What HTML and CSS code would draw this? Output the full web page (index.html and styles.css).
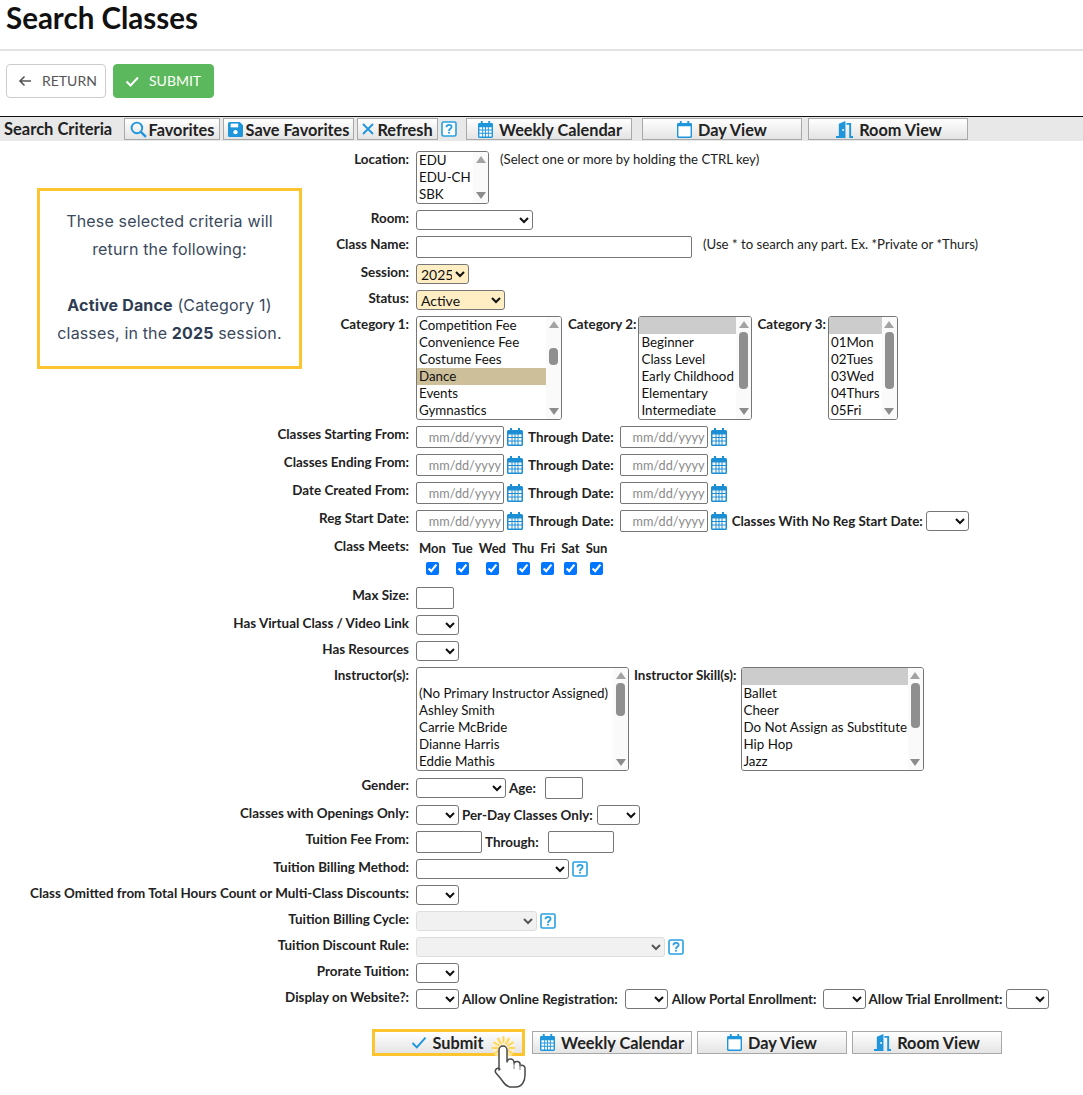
FILE: index.html
```html
<!DOCTYPE html>
<html lang="en">
<head>
<meta charset="utf-8">
<title>Search Classes</title>
<link rel="stylesheet" href="styles.css">
</head>
<body>
<svg class="defs" width="0" height="0" aria-hidden="true">
  <symbol id="cal" viewBox="0 0 16 18"><path fill="currentColor" d="M3 0h2v2h6V0h2v2h1.5A1.5 1.5 0 0 1 16 3.500V16.500A1.500 1.500 0 0 1 14.500 18H1.500A1.500 1.500 0 0 1 0 16.500V3.500A1.500 1.500 0 0 1 1.500 2H3z"/><path fill="#fff" d="M1.500 6.500h3v2.500h-3zM5.500 6.500h2v2.500h-2zM8.500 6.500h2v2.500h-2zM11.500 6.500h3v2.500h-3zM1.500 10h3v2.500h-3zM5.500 10h2v2.500h-2zM8.500 10h2v2.500h-2zM11.500 10h3v2.500h-3zM1.500 13.500h3V16.500h-3zM5.500 13.500h2V16.500h-2zM8.500 13.500h2V16.500h-2zM11.500 13.500h3V16.500h-3z"/></symbol>
  <symbol id="day" viewBox="0 0 16 18"><path fill="currentColor" d="M3 0h2v2h6V0h2v2h1.500A1.500 1.500 0 0 1 16 3.500V16.500A1.500 1.500 0 0 1 14.500 18H1.500A1.500 1.500 0 0 1 0 16.500V3.500A1.500 1.500 0 0 1 1.500 2H3z"/><path fill="#fff" d="M1.500 5.500h13V16a.5.5 0 0 1-.5.5H2a.5.5 0 0 1-.5-.5z"/></symbol>
  <symbol id="door" viewBox="0 0 18 18"><path fill="currentColor" d="M3 3 10 0V18H0V16H3z"/><path fill="currentColor" d="M11 2h5v14h2v2h-4V4h-3z"/><circle cx="7.500" cy="9.500" r="1" fill="#fff"/></symbol>
  <symbol id="help" viewBox="0 0 16 16"><rect x="1" y="1" width="14" height="14" rx="1.500" fill="#fff" stroke="currentColor" stroke-width="1.600"/><path fill="none" stroke="currentColor" stroke-width="1.800" d="M5.400 6.200C5.500 4.600 6.600 3.800 8 3.800c1.500 0 2.600.9 2.600 2.200 0 1.800-2.600 1.900-2.600 3.900"/><rect x="7.100" y="10.800" width="1.800" height="1.800" fill="currentColor"/></symbol>
</svg>

<h1 class="title">Search Classes</h1>
<div class="actions">
  <button class="act act-return" type="button">
    <svg class="act-icon" viewBox="0 0 14 14"><path fill="none" stroke="currentColor" stroke-width="1.600" d="M13 7H2M6.500 2.500 2 7l4.500 4.500"/></svg>RETURN
  </button>
  <button class="act act-submit" type="button">
    <svg class="act-icon" viewBox="0 0 14 14"><path fill="none" stroke="currentColor" stroke-width="2" d="M1.500 7.500 5.500 11.500 13 3.500"/></svg>SUBMIT
  </button>
</div>

<main class="page">
  <div class="toolbar">
    <span class="toolbar-title">Search Criteria</span>
    <button class="tool tool-fav" type="button">
      <svg class="ico ico-16" viewBox="0 0 16 16"><circle cx="6.500" cy="6.500" r="5" fill="none" stroke="currentColor" stroke-width="1.800"/><path stroke="currentColor" stroke-width="2.200" d="M10.200 10.200 15 15"/></svg>Favorites
    </button>
    <button class="tool tool-save" type="button">
      <svg class="ico ico-15" viewBox="0 0 14 14"><path fill="currentColor" d="M1.500 0H11l3 3v9.500a1.500 1.500 0 0 1-1.500 1.500h-11A1.500 1.500 0 0 1 0 12.500v-11A1.500 1.500 0 0 1 1.500 0z"/><path fill="#fff" d="M2.500 1.500h7v3.500h-7z"/><circle cx="7" cy="9.500" r="2" fill="#fff"/></svg>Save Favorites
    </button>
    <button class="tool tool-refresh" type="button">
      <svg class="ico ico-12" viewBox="0 0 12 12"><path stroke="currentColor" stroke-width="1.800" d="M1 1 11 11M11 1 1 11"/></svg>Refresh
    </button>
    <svg class="ico help help-bar"><use href="#help"/></svg>
    <button class="tool view view-week" type="button"><svg class="ico ico-cal"><use href="#cal"/></svg>Weekly Calendar</button>
    <button class="tool view view-day" type="button"><svg class="ico ico-cal"><use href="#day"/></svg>Day View</button>
    <button class="tool view view-room" type="button"><svg class="ico ico-door"><use href="#door"/></svg>Room View</button>
  </div>

  <aside class="callout">
    <p>These selected criteria will return the following:</p>
    <p><b>Active Dance</b> (Category 1) classes, in the <b>2025</b> session.</p>
  </aside>

  <form class="form">
    <div class="row">
      <label class="lbl">Location:</label>
      <div class="field">
        <div class="list list-loc">
          <div class="opts"><div class="opt">EDU</div><div class="opt">EDU-CH</div><div class="opt">SBK</div></div>
          <div class="sb"><i class="up"></i><i class="dn"></i></div>
        </div>
        <span class="hint hint-loc">(Select one or more by holding the CTRL key)</span>
      </div>
    </div>
    <div class="row"><label class="lbl">Room:</label><div class="field"><select class="sel w-room"><option></option></select></div></div>
    <div class="row">
      <label class="lbl">Class Name:</label>
      <div class="field"><input class="inp w-name" type="text"><span class="hint hint-name">(Use * to search any part. Ex. *Private or *Thurs)</span></div>
    </div>
    <div class="row"><label class="lbl">Session:</label><div class="field"><select class="sel hl w-sess"><option>2025</option></select></div></div>
    <div class="row"><label class="lbl">Status:</label><div class="field"><select class="sel hl w-stat"><option>Active</option></select></div></div>
    <div class="row">
      <label class="lbl">Category 1:</label>
      <div class="field">
        <div class="list list-c1">
          <div class="opts"><div class="opt">Competition Fee</div><div class="opt">Convenience Fee</div><div class="opt">Costume Fees</div><div class="opt on-tan">Dance</div><div class="opt">Events</div><div class="opt">Gymnastics</div></div>
          <div class="sb"><i class="up"></i><span class="track"><em class="thumb th-c1"></em></span><i class="dn"></i></div>
        </div>
        <label class="lbl-in m-c2">Category 2:</label>
        <div class="list list-c2">
          <div class="opts"><div class="opt on-grey">&nbsp;</div><div class="opt">Beginner</div><div class="opt">Class Level</div><div class="opt">Early Childhood</div><div class="opt">Elementary</div><div class="opt">Intermediate</div></div>
          <div class="sb"><i class="up"></i><span class="track"><em class="thumb th-long"></em></span><i class="dn"></i></div>
        </div>
        <label class="lbl-in m-c3">Category 3:</label>
        <div class="list list-c3">
          <div class="opts"><div class="opt on-grey">&nbsp;</div><div class="opt">01Mon</div><div class="opt">02Tues</div><div class="opt">03Wed</div><div class="opt">04Thurs</div><div class="opt">05Fri</div></div>
          <div class="sb"><i class="up"></i><span class="track"><em class="thumb th-long"></em></span><i class="dn"></i></div>
        </div>
      </div>
    </div>

    <div class="row">
      <label class="lbl">Classes Starting From:</label>
      <div class="field center">
        <input class="inp date" type="text" placeholder="mm/dd/yyyy"><svg class="ico ico-date"><use href="#cal"/></svg>
        <span class="in-lbl m-thru">Through Date:</span>
        <input class="inp date" type="text" placeholder="mm/dd/yyyy"><svg class="ico ico-date"><use href="#cal"/></svg>
      </div>
    </div>
    <div class="row">
      <label class="lbl">Classes Ending From:</label>
      <div class="field center">
        <input class="inp date" type="text" placeholder="mm/dd/yyyy"><svg class="ico ico-date"><use href="#cal"/></svg>
        <span class="in-lbl m-thru">Through Date:</span>
        <input class="inp date" type="text" placeholder="mm/dd/yyyy"><svg class="ico ico-date"><use href="#cal"/></svg>
      </div>
    </div>
    <div class="row">
      <label class="lbl">Date Created From:</label>
      <div class="field center">
        <input class="inp date" type="text" placeholder="mm/dd/yyyy"><svg class="ico ico-date"><use href="#cal"/></svg>
        <span class="in-lbl m-thru">Through Date:</span>
        <input class="inp date" type="text" placeholder="mm/dd/yyyy"><svg class="ico ico-date"><use href="#cal"/></svg>
      </div>
    </div>
    <div class="row">
      <label class="lbl">Reg Start Date:</label>
      <div class="field center">
        <input class="inp date" type="text" placeholder="mm/dd/yyyy"><svg class="ico ico-date"><use href="#cal"/></svg>
        <span class="in-lbl m-thru">Through Date:</span>
        <input class="inp date" type="text" placeholder="mm/dd/yyyy"><svg class="ico ico-date"><use href="#cal"/></svg>
        <span class="in-lbl m-noreg">Classes With No Reg Start Date:</span>
        <select class="sel w-43 m-3"><option></option></select>
      </div>
    </div>

    <div class="row">
      <label class="lbl">Class Meets:</label>
      <div class="field">
        <div class="days">
          <span>Mon</span><span>Tue</span><span>Wed</span><span>Thu</span><span>Fri</span><span>Sat</span><span>Sun</span>
          <input type="checkbox" checked><input type="checkbox" checked><input type="checkbox" checked><input type="checkbox" checked><input type="checkbox" checked><input type="checkbox" checked><input type="checkbox" checked>
        </div>
      </div>
    </div>

    <div class="row"><label class="lbl">Max Size:</label><div class="field"><input class="inp w-max" type="text"></div></div>
    <div class="row"><label class="lbl">Has Virtual Class / Video Link</label><div class="field"><select class="sel w-43"><option></option></select></div></div>
    <div class="row"><label class="lbl">Has Resources</label><div class="field"><select class="sel w-43"><option></option></select></div></div>
    <div class="row">
      <label class="lbl">Instructor(s):</label>
      <div class="field">
        <div class="list list-in">
          <div class="opts"><div class="opt">&nbsp;</div><div class="opt">(No Primary Instructor Assigned)</div><div class="opt">Ashley Smith</div><div class="opt">Carrie McBride</div><div class="opt">Dianne Harris</div><div class="opt">Eddie Mathis</div></div>
          <div class="sb"><i class="up"></i><span class="track"><em class="thumb th-in"></em></span><i class="dn"></i></div>
        </div>
        <label class="lbl-in m-skill">Instructor Skill(s):</label>
        <div class="list list-sk">
          <div class="opts"><div class="opt on-grey">&nbsp;</div><div class="opt">Ballet</div><div class="opt">Cheer</div><div class="opt">Do Not Assign as Substitute</div><div class="opt">Hip Hop</div><div class="opt">Jazz</div></div>
          <div class="sb"><i class="up"></i><span class="track"><em class="thumb th-sk"></em></span><i class="dn"></i></div>
        </div>
      </div>
    </div>
    <div class="row">
      <label class="lbl">Gender:</label>
      <div class="field center"><select class="sel w-gender"><option></option></select><span class="in-lbl m-age">Age:</span><input class="inp w-max" type="text"></div>
    </div>
    <div class="row">
      <label class="lbl">Classes with Openings Only:</label>
      <div class="field center"><select class="sel w-43"><option></option></select><span class="in-lbl m-3">Per-Day Classes Only:</span><select class="sel w-43 m-4"><option></option></select></div>
    </div>
    <div class="row">
      <label class="lbl">Tuition Fee From:</label>
      <div class="field center"><input class="inp w-fee" type="text"><span class="in-lbl m-3">Through:</span><input class="inp w-fee m-9" type="text"></div>
    </div>
    <div class="row">
      <label class="lbl">Tuition Billing Method:</label>
      <div class="field center"><select class="sel w-bill"><option></option></select><svg class="ico help"><use href="#help"/></svg></div>
    </div>
    <div class="row"><label class="lbl">Class Omitted from Total Hours Count or Multi-Class Discounts:</label><div class="field"><select class="sel w-43"><option></option></select></div></div>
    <div class="row">
      <label class="lbl">Tuition Billing Cycle:</label>
      <div class="field center"><select class="sel w-cycle" disabled><option></option></select><svg class="ico help"><use href="#help"/></svg></div>
    </div>
    <div class="row">
      <label class="lbl">Tuition Discount Rule:</label>
      <div class="field center"><select class="sel w-disc" disabled><option></option></select><svg class="ico help"><use href="#help"/></svg></div>
    </div>
    <div class="row"><label class="lbl">Prorate Tuition:</label><div class="field"><select class="sel w-43"><option></option></select></div></div>
    <div class="row">
      <label class="lbl">Display on Website?:</label>
      <div class="field center">
        <select class="sel w-43"><option></option></select>
        <span class="in-lbl m-3">Allow Online Registration:</span>
        <select class="sel w-43 m-7"><option></option></select>
        <span class="in-lbl m-4">Allow Portal Enrollment:</span>
        <select class="sel w-43 m-6"><option></option></select>
        <span class="in-lbl m-3">Allow Trial Enrollment:</span>
        <select class="sel w-43 m-4"><option></option></select>
      </div>
    </div>

    <div class="bottom">
      <button class="tool bot bot-submit" type="button">
        <svg class="ico ico-check" viewBox="0 0 14 12"><path fill="none" stroke="currentColor" stroke-width="1.800" d="M1 6.500 5 10.500 13 1.500"/></svg>Submit
      </button>
      <button class="tool bot bot-week" type="button"><svg class="ico ico-cal"><use href="#cal"/></svg>Weekly Calendar</button>
      <button class="tool bot bot-day" type="button"><svg class="ico ico-cal"><use href="#day"/></svg>Day View</button>
      <button class="tool bot bot-room" type="button"><svg class="ico ico-door"><use href="#door"/></svg>Room View</button>
      <svg class="pointer" viewBox="0 0 44 62" aria-hidden="true">
        <circle cx="15.500" cy="18" r="11" fill="#fff3c4" opacity=".7"/>
        <g stroke="#ffd45e" stroke-width="1.800" stroke-linecap="round">
          <path d="M15.500 7V12M21 8.500 18 13.700M25 12.500 20 15.500M26.500 18H21M25 23.500 20 20.500M10 8.500 13 13.700M6 12.500 11 15.500M4.500 18H10M6 23.500 11 20.500"/>
        </g>
        <path fill="#fff" stroke="#4a4a4a" stroke-width="1.500" stroke-linejoin="round" d="M11 40V20a4 4 0 0 1 8 0V32a3.500 3.500 0 0 1 7 1v1a3 3 0 0 1 6 1v1a3 3 0 0 1 5 2v7c0 6-3 12-9 12h-5c-5 0-7-4-10-8l-5-6c-2-3 1-6 4-4z"/>
        <path fill="none" stroke="#9a9a9a" stroke-width="1.200" d="M26 33v6M32 35v5"/>
      </svg>
    </div>
  </form>
</main>
</body>
</html>
```

FILE: styles.css
```css
* { box-sizing: border-box; }
html, body { margin: 0; padding: 0; }
body { font-family: Lato, "Liberation Sans", sans-serif; color: #111; background: #fff; width: 1083px; height: 1095px; overflow: hidden; }
.defs { position: absolute; }

.title { margin: 0; height: 51px; padding: 0 0 0 6px; font-size: 29.500px; line-height: 36px; font-weight: 700; color: #111; border-bottom: 2px solid #e2e2e2; }

.actions { display: flex; gap: 7px; padding: 13px 0 0 6px; height: 65px; }
.act { height: 34px; border-radius: 4px; display: flex; align-items: center; font: 14px/1 Lato, sans-serif; padding: 0 0 1px; }
.act-return { width: 100px; background: #fff; border: 1px solid #ccc; color: #555; padding-left: 11px; }
.act-submit { width: 101px; background: #5cb85c; border: 1px solid #5cb85c; color: #fff; padding-left: 11px; }
.act-icon { width: 14px; height: 14px; margin-right: 10px; }

.page { position: relative; }

.toolbar { height: 25px; border-top: 1px solid #111; background: #e8e8e8; display: flex; align-items: center; font-weight: 700; font-size: 16.500px; }
.toolbar-title { width: 124px; padding-left: 4px; color: #222; white-space: nowrap; }
.tool { height: 22px; padding: 0; border: 1px solid #a8a8a8; background: linear-gradient(#fff, #e4e4e4); font: 700 16.300px Lato, sans-serif; color: #222; display: flex; align-items: center; justify-content: center; white-space: nowrap; }
.tool-fav { width: 96px; }
.tool-save { width: 131px; margin-left: 3px; }
.tool-refresh { width: 81px; margin-left: 3px; }
.help-bar { margin-left: 3px; }
.view-week { width: 166px; margin-left: 9px; padding-left: 2px; }
.view-day { width: 160px; margin-left: 10px; }
.view-room { width: 160px; margin-left: 6px; padding-left: 2px; }

.ico { color: #1f96dc; flex: none; }
.ico-16 { width: 17px; height: 17px; margin-right: 2px; }
.ico-15 { width: 15px; height: 15px; margin-right: 3px; }
.ico-12 { width: 12px; height: 12px; margin-right: 3px; }
.ico-cal { width: 15px; height: 17px; margin-right: 6px; }
.ico-door { width: 17px; height: 17px; margin-right: 6px; }
.ico-check { width: 16px; height: 13px; margin-right: 5px; }
.ico-date { width: 16px; height: 18px; margin: 0 0 0 3px; color: #1c8ed4; }
.help { width: 16px; height: 16px; margin-left: 3px; color: #29a0e0; }

.callout { position: absolute; left: 37px; top: 72px; width: 265px; height: 181px; border: 3px solid #fcc52f; padding: 16px 8px 0; text-align: center; font: 16px/28px Inter, sans-serif; color: #3b4a5e; letter-spacing: .15px; }
.callout p { margin: 0 0 28px; }
.callout b { font-weight: 700; color: #2e3d52; }

.form { padding-top: 10px; display: flex; flex-direction: column; gap: 6px; }
.row { display: flex; gap: 7px; }
.lbl { width: 409px; flex: none; text-align: right; font-size: 13.400px; font-weight: 700; line-height: 16px; color: #222; }
.field { display: flex; align-items: flex-start; flex: 1; min-width: 0; }
.center { align-items: center; }
.lbl-in { font-size: 13.400px; font-weight: 700; line-height: 16px; color: #222; white-space: nowrap; }
.in-lbl { font-size: 13.400px; font-weight: 700; color: #222; white-space: nowrap; }
.hint { font-size: 13.200px; line-height: 16px; color: #222; white-space: nowrap; }
.hint-loc { margin-left: 11px; }
.hint-name { margin-left: 11px; }

.sel { height: 20px; padding: 0; font: 14px Lato, sans-serif; color: #111; background: #fff; border: 1px solid #767676; border-radius: 3px; flex: none; }
.sel:disabled { background: #ececec; border-color: #d0d0d0; }
.hl { background: #ffeec4; }
.inp { height: 22px; border: 1px solid #767676; border-radius: 2px; padding: 0 2px; font: 12.700px Lato, sans-serif; background: #fff; flex: none; }
.inp::placeholder { color: #8a8a8a; opacity: 1; }
.date { width: 88px; text-align: right; }

.w-room { width: 117px; }
.w-name { width: 276px; }
.w-sess { width: 53px; }
.w-stat { width: 89px; }
.w-43 { width: 43px; }
.w-max { width: 38px; }
.w-gender { width: 90px; }
.w-fee { width: 66px; }
.w-bill { width: 153px; }
.w-cycle { width: 121px; }
.w-disc { width: 249px; }

.m-thru { margin-left: 5px; margin-right: 6px; }
.m-noreg { margin-left: 5px; }
.m-age { margin: 0 9px 0 3px; }
.m-3 { margin-left: 3px; }
.m-4 { margin-left: 4px; }
.m-6 { margin-left: 6px; }
.m-7 { margin-left: 7px; }
.m-9 { margin-left: 9px; }
.m-c2 { margin: 0 2px 0 6px; }
.m-c3 { margin: 0 2px 0 5px; }
.m-skill { margin: 0 4px 0 5px; }

.list { display: flex; height: 104px; border: 1px solid #767676; border-radius: 3px; background: #fff; overflow: hidden; flex: none; font-size: 13.330px; color: #111; }
.opts { flex: 1; min-width: 0; }
.opt { height: 17px; line-height: 16px; padding: 0 0 1px 2px; white-space: nowrap; }
.on-tan { background: #cdbf9a; }
.on-grey { background: #cccccc; }
.sb { width: 15px; flex: none; background: #fafafa; display: flex; flex-direction: column; align-items: center; justify-content: space-between; padding: 4px 0; }
.sb i { display: block; width: 0; height: 0; border-left: 5px solid transparent; border-right: 5px solid transparent; flex: none; }
.up { border-bottom: 7px solid #a3a3a3; }
.dn { border-top: 7px solid #8c8c8c; }
.track { flex: 1; display: block; width: 9px; }
.thumb { display: block; width: 9px; background: #8f8f8f; border-radius: 4px; }
.th-c1 { height: 17px; margin-top: 20px; }
.th-long { height: 57px; margin-top: 4px; }
.th-in { height: 33px; margin-top: 4px; }
.th-sk { height: 45px; margin-top: 4px; }

.list-loc { width: 73px; height: 53px; }
.list-c1 { width: 146px; }
.list-c2 { width: 114px; }
.list-c3 { width: 70px; }
.list-in { width: 213px; }
.list-sk { width: 183px; }

.days { display: grid; grid-template-rows: 16px 25px; grid-template-columns: repeat(7, auto); justify-items: center; align-items: center; height: 43px; padding-top: 2px; font-size: 13px; font-weight: 700; color: #222; }
.days span { padding: 0 3px; }
.days input { margin: 0; width: 13px; height: 13px; }

.bottom { position: relative; display: flex; align-items: center; margin: 14px 0 0 372px; height: 27px; }
.bot { height: 23px; }
.bot-submit { width: 153px; height: 27px; border: 3px solid #fcc52f; padding-right: 2px; }
.bot-week { width: 160px; margin-left: 7px; }
.bot-day { width: 150px; margin-left: 5px; }
.bot-room { width: 150px; margin-left: 5px; }
.pointer { position: absolute; left: 116px; top: 1px; width: 44px; height: 62px; }
```
